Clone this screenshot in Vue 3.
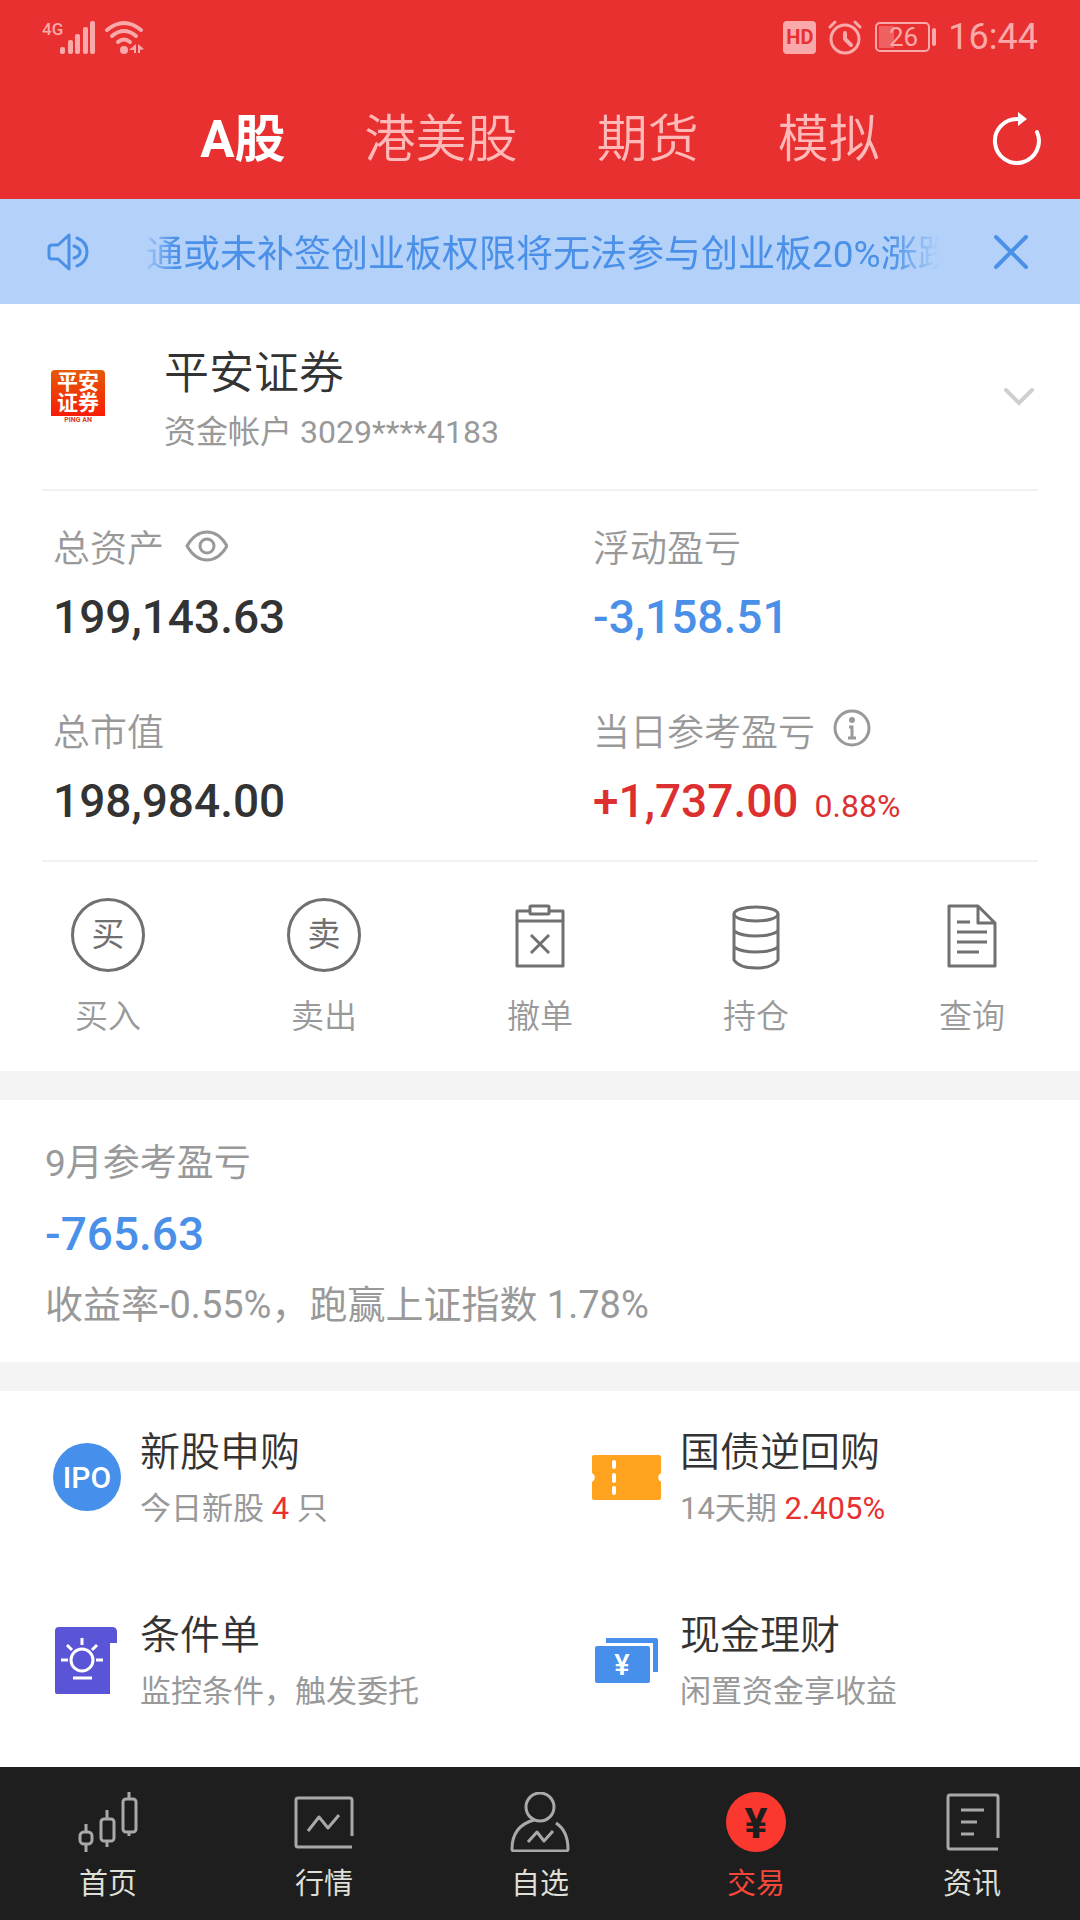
<script setup>
import { ref } from 'vue'

const markets = ['A股', '港美股', '期货', '模拟']
const activeMarket = ref('A股')
const noticeVisible = ref(true)

const metrics = [
  { label: '总资产', value: '199,143.63', icon: 'eye' },
  { label: '浮动盈亏', value: '-3,158.51', tone: 'down' },
  { label: '总市值', value: '198,984.00' },
  { label: '当日参考盈亏', value: '+1,737.00', tone: 'up', icon: 'info', rate: '0.88%' },
]

const actions = [
  { label: '买入', badge: '买' },
  { label: '卖出', badge: '卖' },
  { label: '撤单', icon: 'cancel' },
  { label: '持仓', icon: 'holdings' },
  { label: '查询', icon: 'query' },
]

const features = [
  { title: '新股申购', icon: 'ipo', before: '今日新股 ', highlight: '4', after: ' 只' },
  { title: '国债逆回购', icon: 'ticket', before: '14天期 ', highlight: '2.405%' },
  { title: '条件单', icon: 'bulb', before: '监控条件，触发委托' },
  { title: '现金理财', icon: 'cash', before: '闲置资金享收益' },
]

const tabs = [
  { label: '首页', icon: 'home' },
  { label: '行情', icon: 'quote' },
  { label: '自选', icon: 'watch' },
  { label: '交易', icon: 'trade', active: true },
  { label: '资讯', icon: 'news' },
]
</script>

<template>
  <div class="app">
    <header class="header">
      <div class="status">
        <svg class="status-signal" width="103" height="36" viewBox="0 0 103 36" fill="currentColor" aria-hidden="true">
          <text x="0" y="16" font-size="17" font-weight="500">4G</text>
          <rect x="18" y="28" width="5" height="7" rx="2" />
          <rect x="26" y="21" width="5" height="14" rx="2" />
          <rect x="33" y="15" width="5" height="20" rx="2" />
          <rect x="41" y="8" width="5" height="27" rx="2" />
          <rect x="48" y="2" width="5" height="33" rx="2" />
          <g fill="none" stroke="currentColor" stroke-width="4" stroke-linecap="round">
            <path d="M65 11Q82 -3 99 11" />
            <path d="M70 17Q82 7 94 17" />
            <path d="M76 23Q82 18 88 23" />
          </g>
          <circle cx="82" cy="31" r="4" />
          <path d="M87 31L94 25V34H92V31ZM96 25L102 30L98 31V34H96Z" />
        </svg>
        <div class="status-right">
          <span class="hd">HD</span>
          <svg width="34" height="36" viewBox="0 0 34 36" fill="none" stroke="currentColor" stroke-width="3" aria-hidden="true">
            <circle cx="17" cy="20" r="14" />
            <path d="M2 8L7 3M32 8L27 3" stroke-linecap="round" />
            <path d="M17 14V20L23 26" stroke-width="4" stroke-linecap="round" />
          </svg>
          <svg width="62" height="32" viewBox="0 0 62 32" fill="currentColor" aria-hidden="true">
            <rect x="2" y="2" width="53" height="28" rx="4" fill="none" stroke="currentColor" stroke-width="2" />
            <rect x="5" y="5" width="15" height="22" opacity="0.4" />
            <rect x="58" y="7" width="4" height="18" rx="2" />
            <text x="15" y="25" font-size="26">26</text>
          </svg>
          <span class="clock">16:44</span>
        </div>
      </div>
      <div class="market-bar">
        <nav class="markets" aria-label="市场">
          <button
            v-for="market in markets"
            :key="market"
            type="button"
            :class="{ active: market === activeMarket }"
            @click="activeMarket = market"
          >{{ market }}</button>
        </nav>
        <button class="refresh" type="button" aria-label="刷新">
          <svg width="52" height="56" viewBox="0 0 52 56" fill="none" stroke="#fff">
            <path d="M45 20A22 22 0 1 1 26 7" stroke-width="4" stroke-linecap="round" />
            <path d="M26 0L35 7L26 14Z" fill="#fff" stroke="none" />
          </svg>
        </button>
      </div>
    </header>

    <section v-if="noticeVisible" class="notice">
      <svg width="42" height="40" viewBox="0 0 42 40" fill="none" stroke="currentColor" stroke-width="3" stroke-linejoin="round" aria-hidden="true">
        <path d="M2 16Q2 13 5 13H11L22 3V37L11 27H5Q2 27 2 24Z" />
        <path d="M27 14Q33 16 33 20Q33 24 27 26M30 6Q40 10 40 20Q40 30 30 34" stroke-linecap="round" />
      </svg>
      <p>通或未补签创业板权限将无法参与创业板20%涨跌</p>
      <button type="button" aria-label="关闭" @click="noticeVisible = false">
        <svg width="34" height="34" viewBox="0 0 34 34" fill="none" stroke="currentColor" stroke-width="4" stroke-linecap="round">
          <path d="M2 2L32 32M32 2L2 32" />
        </svg>
      </button>
    </section>

    <main>
      <button class="account" type="button">
        <span class="logo">
          <span class="logo-mark"><span>平安</span><span>证券</span></span>
          <span class="logo-foot">PING AN</span>
        </span>
        <span class="account-text">
          <span class="account-name">平安证券</span>
          <span class="account-no">资金帐户 3029****4183</span>
        </span>
        <svg width="34" height="20" viewBox="0 0 34 20" fill="none" stroke="#cfcfcf" stroke-width="4" stroke-linecap="round" aria-hidden="true">
          <path d="M4 3L17 16L30 3" />
        </svg>
      </button>

      <dl class="metrics">
        <div v-for="item in metrics" :key="item.label">
          <dt>
            {{ item.label }}
            <svg v-if="item.icon === 'eye'" width="46" height="42" viewBox="0 0 46 42" fill="none" stroke="currentColor" stroke-width="3" aria-hidden="true">
              <path d="M5 17Q13 3 25 3Q37 3 45 17Q37 31 25 31Q13 31 5 17Z" stroke-linejoin="round" />
              <circle cx="25" cy="17" r="7" />
            </svg>
            <svg v-if="item.icon === 'info'" width="38" height="50" viewBox="0 0 38 50" fill="none" stroke="currentColor" stroke-width="3" aria-hidden="true">
              <circle cx="19" cy="19" r="17" />
              <circle cx="19" cy="11" r="3" fill="currentColor" stroke="none" />
              <path d="M16 18H19V28M15 29H23" />
            </svg>
          </dt>
          <dd :class="item.tone">{{ item.value }}<small v-if="item.rate">{{ item.rate }}</small></dd>
        </div>
      </dl>

      <div class="actions">
        <button v-for="action in actions" :key="action.label" type="button">
          <span v-if="action.badge" class="badge">{{ action.badge }}</span>
          <svg v-else width="74" height="74" viewBox="0 0 74 74" fill="none" stroke="currentColor" stroke-width="3" stroke-linejoin="round" aria-hidden="true">
            <g v-if="action.icon === 'cancel'">
              <path d="M28 13H14V68H60V13H46M14 23H60" />
              <rect x="27" y="8" width="19" height="8" rx="1" />
              <path d="M28 37L46 55M46 37L28 55" />
            </g>
            <g v-if="action.icon === 'holdings'">
              <ellipse cx="37" cy="16" rx="22" ry="7" />
              <path d="M15 16V62Q20 70 37 70Q54 70 59 62V16M15 33Q22 38 37 38Q52 38 59 33M15 49Q22 54 37 54Q52 54 59 49" />
            </g>
            <g v-if="action.icon === 'query'">
              <path d="M14 8H43L60 25V68H14ZM43 8V25H60" />
              <path d="M22 24H35M22 34H52M22 44H52M22 54H44" />
            </g>
          </svg>
          <span class="action-label">{{ action.label }}</span>
        </button>
      </div>

      <section class="month">
        <h2>9月参考盈亏</h2>
        <strong>-765.63</strong>
        <p>收益率-0.55%，跑赢上证指数 1.78%</p>
      </section>

      <section class="features">
        <a v-for="item in features" :key="item.title" href="#">
          <svg width="69" height="69" viewBox="0 0 69 69" aria-hidden="true">
            <g v-if="item.icon === 'ipo'">
              <circle cx="35" cy="34" r="34" fill="#468fea" />
              <text x="35" y="45" font-size="30" font-weight="500" fill="#fff" text-anchor="middle">IPO</text>
            </g>
            <g v-if="item.icon === 'ticket'">
              <path d="M2 12H67Q69 12 69 14V30A5 5 0 0 0 69 39V55Q69 57 67 57H2Q0 57 0 55V39A5 5 0 0 0 0 30V14Q0 12 2 12Z" fill="#ffa31f" />
              <path d="M22 19V24M22 32V38M22 45V50" stroke="#fff" stroke-width="4" stroke-linecap="round" />
            </g>
            <g v-if="item.icon === 'bulb'">
              <path d="M7 1H60Q65 1 65 6V17H58V68H5Q3 68 3 66V5Q3 1 7 1Z" fill="#5a55d6" />
              <g fill="none" stroke="#fff" stroke-width="3">
                <circle cx="30" cy="34" r="11" />
                <path d="M30 12V19M9 34H16M44 34H51M15 19L20 24M45 19L40 24M21 52H40" />
              </g>
            </g>
            <g v-if="item.icon === 'cash'">
              <path d="M14 12H64Q66 12 66 14V46H61V17H14Z" fill="#468fea" />
              <rect x="3" y="20" width="55" height="37" rx="2" fill="#468fea" />
              <text x="30" y="49" font-size="29" font-weight="500" fill="#fff" text-anchor="middle">¥</text>
            </g>
          </svg>
          <span>
            <b>{{ item.title }}</b>
            <span class="feature-note">{{ item.before }}<em v-if="item.highlight">{{ item.highlight }}</em>{{ item.after }}</span>
          </span>
        </a>
      </section>
    </main>

    <nav class="tabbar" aria-label="主导航">
      <a v-for="tab in tabs" :key="tab.label" href="#" :class="{ active: tab.active }">
        <svg width="60" height="60" viewBox="0 0 60 60" fill="none" stroke="#a9a9a9" stroke-width="3" stroke-linejoin="round" aria-hidden="true">
          <g v-if="tab.icon === 'home'">
            <rect x="2" y="40" width="12" height="12" rx="4" />
            <rect x="23" y="27" width="13" height="22" rx="3" />
            <rect x="45" y="7" width="13" height="33" rx="3" />
            <path d="M8 32V40M8 52V60M29 18V27M29 49V55M51 0V7M51 40V44" />
          </g>
          <path v-if="tab.icon === 'quote'" d="M58 44V8Q58 6 56 6H4Q2 6 2 8V53Q2 55 4 55H58M14 39L25 25L34 36L45 23" />
          <g v-if="tab.icon === 'watch'">
            <circle cx="30" cy="15" r="14" />
            <path d="M24 28Q2 34 2 57Q2 59 4 59H56Q58 59 58 57Q58 39 46 31M18 50L27 40L34 49L43 39" />
          </g>
          <g v-if="tab.icon === 'trade'">
            <circle cx="30" cy="30" r="30" fill="#fa382f" stroke="none" />
            <text x="30" y="46" font-size="43" font-weight="700" fill="#1e1e1e" stroke="none" text-anchor="middle">¥</text>
          </g>
          <path v-if="tab.icon === 'news'" d="M56 46V5Q56 3 54 3H8Q6 3 6 5V55Q6 57 8 57H56M19 18H42M19 30H35M19 42H32" />
        </svg>
        <span>{{ tab.label }}</span>
      </a>
    </nav>
  </div>
</template>

<style>
body {
  margin: 0;
  background: #fff;
}
</style>

<style scoped>
.app {
  display: flex;
  flex-direction: column;
  min-height: 100vh;
  background: #fff;
  color: #333;
  font-family: Roboto, "Noto Sans CJK SC", sans-serif;
  font-weight: 350;
}

svg {
  display: block;
  flex: none;
}

button {
  padding: 0;
  border: 0;
  background: none;
  color: inherit;
  font: inherit;
  cursor: pointer;
}

a {
  color: inherit;
  text-decoration: none;
}

p,
h2,
dl,
dd {
  margin: 0;
}

.header {
  background: #e83030;
}

.status {
  display: flex;
  align-items: center;
  justify-content: space-between;
  height: 74px;
  padding: 0 42px;
  color: #f9a9a9;
  font-weight: 400;
}

.status-right {
  display: flex;
  align-items: center;
  gap: 12px;
}

.hd {
  width: 33px;
  border-radius: 4px;
  background: #f9a9a9;
  color: #e83030;
  font-size: 20px;
  font-weight: 700;
  line-height: 33px;
  text-align: center;
}

.clock {
  font-size: 36px;
  line-height: 40px;
}

.market-bar {
  display: grid;
  grid-template-columns: 1fr auto 1fr;
  align-items: center;
  height: 118px;
  padding-top: 7px;
}

.markets {
  display: flex;
  grid-column: 2;
  gap: 79px;
  color: #ffb9b9;
  font-size: 51px;
  line-height: 64px;
}

.markets .active {
  color: #fff;
  font-weight: 700;
}

.refresh {
  justify-self: end;
  margin-right: 36px;
}

.notice {
  display: flex;
  align-items: center;
  height: 105px;
  padding: 0 52px 0 47px;
  background: #b4d2f9;
  color: #4a90e8;
}

.notice p {
  flex: 1;
  min-width: 0;
  margin: 0 54px 0 50px;
  padding: 6px 0 0 7px;
  overflow: hidden;
  font-size: 37px;
  font-weight: 400;
  line-height: 56px;
  white-space: nowrap;
  mask-image: linear-gradient(90deg, transparent, #000 36px, #000 calc(100% - 50px), transparent);
}

.account {
  display: flex;
  align-items: center;
  width: calc(100% - 84px);
  min-height: 187px;
  margin: 0 42px;
  padding: 0 2px 0 9px;
  border-bottom: 2px solid #f1f1f1;
  text-align: left;
}

.logo {
  width: 54px;
  text-align: center;
}

.logo-mark {
  display: flex;
  flex-direction: column;
  padding: 2px 0;
  border-radius: 4px 4px 0 0;
  background: linear-gradient(#e65a08, #f91c06);
  color: #fff;
  font-size: 21px;
  font-weight: 700;
  line-height: 21px;
}

.logo-foot {
  display: block;
  color: #d8401c;
  font-size: 7px;
  font-weight: 700;
  line-height: 8px;
}

.account-text {
  display: flex;
  flex: 1;
  flex-direction: column;
  margin-left: 59px;
  padding-top: 12px;
  line-height: 58px;
}

.account-name {
  font-size: 45px;
}

.account-no {
  color: #999;
  font-size: 32px;
  font-weight: 400;
}

.metrics {
  display: grid;
  grid-template-columns: 1fr 1fr;
  row-gap: 50px;
  margin: 0 42px;
  padding: 31px 0 15px;
  border-bottom: 2px solid #f1f1f1;
}

.metrics div {
  padding-left: 11px;
}

.metrics div:nth-child(even) {
  padding-left: 53px;
}

.metrics dt {
  display: flex;
  align-items: center;
  gap: 18px;
  height: 56px;
  color: #999;
  font-size: 37px;
  line-height: 50px;
}

.metrics dd {
  font-size: 46px;
  font-weight: 500;
  line-height: 78px;
  white-space: nowrap;
}

.metrics .down {
  color: #4a90e8;
}

.metrics .up {
  color: #dc3030;
}

.metrics small {
  margin-left: 16px;
  font-size: 32px;
  font-weight: 400;
}

.actions {
  display: grid;
  grid-template-columns: repeat(5, 1fr);
  padding: 36px 0 30px;
}

.actions button {
  display: flex;
  flex-direction: column;
  align-items: center;
  gap: 21px;
  color: #707070;
}

.badge {
  box-sizing: border-box;
  width: 74px;
  border: 3px solid #707070;
  border-radius: 50%;
  font-size: 33px;
  font-weight: 400;
  line-height: 68px;
}

.action-label {
  color: #999;
  font-size: 33px;
  line-height: 48px;
}

.month {
  padding: 36px 45px 28px;
  border: solid #f4f4f4;
  border-width: 29px 0;
  color: #999;
  font-size: 38px;
  line-height: 58px;
}

.month h2 {
  font-size: 37px;
  font-weight: 400;
  line-height: 56px;
}

.month p {
  font-weight: 400;
}

.month strong {
  display: block;
  color: #4a90e8;
  font-size: 46px;
  font-weight: 500;
  line-height: 84px;
}

.features {
  display: grid;
  grid-template-columns: 1fr 1fr;
  row-gap: 71px;
  padding: 34px 0 47px;
}

.features a {
  display: flex;
  align-items: center;
  gap: 19px;
  padding-left: 52px;
}

.features a > svg {
  margin-bottom: 7px;
}

.features b {
  display: block;
  font-size: 40px;
  font-weight: 350;
  line-height: 56px;
}

.feature-note {
  display: block;
  color: #999;
  font-size: 31px;
  font-weight: 400;
  line-height: 56px;
}

.features em {
  color: #e83030;
  font-style: normal;
}

.tabbar {
  display: grid;
  grid-template-columns: repeat(5, 1fr);
  margin-top: auto;
  padding: 25px 0 18px;
  background: #1e1e1e;
  color: #dedfd6;
  font-size: 29px;
  font-weight: 400;
  line-height: 36px;
}

.tabbar a {
  display: flex;
  flex-direction: column;
  align-items: center;
  gap: 14px;
}

.tabbar .active {
  color: #f5463a;
}
</style>
